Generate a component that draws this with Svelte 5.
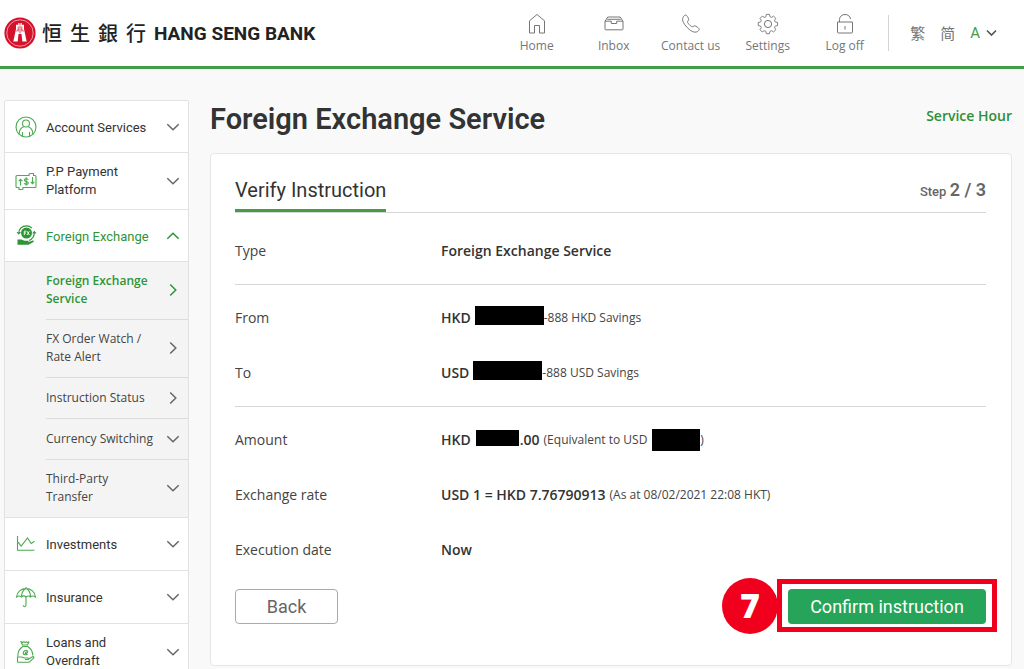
<script>
  const nav = [
    { id: 'home', label: 'Home' },
    { id: 'inbox', label: 'Inbox' },
    { id: 'phone', label: 'Contact us' },
    { id: 'gear', label: 'Settings' },
    { id: 'lock', label: 'Log off' }
  ];

  const menu = [
    { id: 'account', label: 'Account Services' },
    { id: 'payment', label: 'P.P Payment Platform', tall: true },
    {
      id: 'fx',
      label: 'Foreign Exchange',
      open: true,
      children: [
        { label: 'Foreign Exchange Service', active: true },
        { label: 'FX Order Watch / Rate Alert' },
        { label: 'Instruction Status' },
        { label: 'Currency Switching', expands: true },
        { label: 'Third-Party Transfer', expands: true }
      ]
    },
    { id: 'invest', label: 'Investments' },
    { id: 'insurance', label: 'Insurance' },
    { id: 'loans', label: 'Loans and Overdraft', tall: true }
  ];
</script>

{#snippet chevron(dir)}
  <svg class="chevron" width="14" height="14" viewBox="0 0 14 14" aria-hidden="true">
    {#if dir === 'right'}
      <path d="M4.2 1.5 9.8 7l-5.600 5.500" />
    {:else if dir === 'up'}
      <path d="M1.300 9.800 7 4.200l5.700 5.600" />
    {:else}
      <path d="M1.300 4.200 7 9.800l5.700-5.600" />
    {/if}
  </svg>
{/snippet}

<header>
  <a class="brand" href="#home" aria-label="Hang Seng Bank">
    <svg width="32" height="32" viewBox="0 0 32 32" aria-hidden="true">
      <circle cx="16" cy="16" r="15.600" fill="#d5112c" />
      <circle cx="16" cy="16" r="13.200" fill="none" stroke="#f5b9c0" stroke-width=".8" />
      <path d="M14.300 6h1.200v1.800h1V6h1.200v1.800h2.300v4.200l2.700 12.500h-4.400l-.8-7.500h-3l-.8 7.500H9.300L12 12V7.800h2.300z" fill="#fff" />
      <path d="M14.200 9.500v5M16 8.500v8M17.800 9.500v5M12.300 14.500l1.700-2M19.700 14.500l-1.700-2" stroke="#d5112c" stroke-width=".8" fill="none" />
    </svg>
    <span class="han" lang="zh-Hant"><span>恒</span><span>生</span><span>銀</span><span>行</span></span>
    <span class="latin">HANG SENG BANK</span>
  </a>
  <nav class="top-nav">
    {#each nav as item}
      <a href="#{item.id}">
        <svg width="22" height="22" viewBox="0 0 22 22" aria-hidden="true">
          {#if item.id === 'home'}
            <path d="M3.500 7.800 11 1.500l7.500 6.300v12.200h-5v-7.500h-5V20h-5z" />
          {:else if item.id === 'inbox'}
            <path d="M2 8.200 4.800 4h12.400L20 8.200V16q0 .8-.8.800H2.800Q2 16.800 2 16zM2 8.200h6.300v2.300h5.400V8.200H20M4.300 6.300h13.400" />
          {:else if item.id === 'phone'}
            <path d="M3.700 3.300C5.500 1.200 6.600 2 7.600 3.800c1.500 2.500 1.300 3 .3 4.200-.8.900-.4 1.600 1.200 3.400 1.900 2 3 2.900 4 2.100 1.200-.9 1.800-1 4 .5 2.400 1.500 2.700 2.400 1.200 3.900-2.300 2.300-6.300 1.500-10.800-3.100C2.600 9.900 1.400 6 3.700 3.300z" />
          {:else if item.id === 'gear'}
            <path d="M9.300 1.500h3.400l.5 2.500 1.800.8 2.200-1.400 2.400 2.400-1.400 2.200.8 1.800 2.500.5v3.400l-2.500.5-.8 1.800 1.400 2.200-2.400 2.400-2.200-1.400-1.800.8-.5 2.500H9.300L8.800 20 7 19.200l-2.200 1.400-2.400-2.400L3.800 16 3 14.200l-2.500-.5v-3.400L3 9.800 3.800 8 2.400 5.800l2.400-2.400L7 4.800 8.800 4z" transform="translate(.8 0) scale(.92)" stroke-linejoin="round" />
            <circle cx="11" cy="11" r="3.600" />
          {:else}
            <path d="M5.500 9V6.500C5.500 3.500 8 1.500 11 1.500S16.300 3.300 16.500 6M3.500 9h15v10q0 1-1 1h-13q-1 0-1-1zM11 13v3.500" />
          {/if}
        </svg>
        <span>{item.label}</span>
      </a>
    {/each}
  </nav>
  <div class="lang">
    <button type="button" lang="zh-Hant">繁</button>
    <button type="button" lang="zh-Hans">简</button>
    <button type="button" class="size" aria-label="Text size A">A
      <svg width="11" height="8" viewBox="0 0 11 8" aria-hidden="true"><path d="M1 1.500 5.500 6 10 1.500" /></svg>
    </button>
  </div>
</header>

<div class="page">
  <aside>
    {#each menu as item}
      <button type="button" class="item" class:tall={item.tall} class:open={item.open} aria-expanded={!!item.open}>
        <svg class="icon" width="22" height="22" viewBox="0 0 22 22" aria-hidden="true">
          {#if item.id === 'account'}
            <circle cx="11" cy="11" r="10" />
            <circle cx="11" cy="7.500" r="3.500" />
            <path d="M4.200 18.200c0-4.500 2.200-6.700 4.500-7.500M17.800 18.200c0-4.500-2.200-6.700-4.500-7.500M7.500 16v4M14.500 16v4" />
          {:else if item.id === 'payment'}
            <path d="M4 17.500H2q-1 0-1-1v-10q0-1 1-1h12V4.500q0-1 1-1h3.500v2h1.500q1 0 1 1v10q0 1-1 1H8v1q0 1-1 1H4z" />
            <path d="M5.500 15.500V9.500M3.700 11.200 5.500 9.400l1.800 1.800M17.500 7v6.500M15.700 11.800l1.800 1.800 1.800-1.800M13.200 9.700c-.5-1.200-3.900-1.300-3.900.4 0 1.900 4 1.100 4 3 0 1.800-3.500 1.700-4.200.2M11.200 7.300v8.400" />
          {:else if item.id === 'fx'}
            <circle cx="11.500" cy="8" r="5.500" fill="currentColor" stroke="none" />
            <path d="M9.300 10V6.200h2M9.300 8h1.700M12 6.200l2.400 3.800M14.400 6.200 12 10" stroke="#fff" stroke-width=".9" />
            <path d="M3.800 8.500C3.500 4 7 .9 11.500.9c2 0 4 .8 5.500 2.200M19.300 6.500c.5 4.500-2 8-5.300 9M2 7l1.800 2L5.500 7M17.700 8.500l1.600-2 1.700 2" />
            <path d="M2.500 14.500h4l3 1.200h3.500c1 .2.800 1.300 0 1.500l4.800-1.700c1.300-.2 1.400.9.600 1.400l-4.800 2.800H2.500z" fill="currentColor" stroke="none" />
          {:else if item.id === 'invest'}
            <path d="M2.500 3v14.300h17M3 9.200l3.200 4L12.500 5l3.700 5.500 3.300-2.300" />
          {:else if item.id === 'insurance'}
            <path d="M1.500 11C2 6 6 2.600 11 2.600S20 6 20.500 11c-1.600-1.300-4-1.300-5 0-1.300-1.300-3.200-1.300-4.500 0-1.300-1.300-3.200-1.300-4.500 0-1-1.300-3.400-1.300-5 0zM6.500 11c0-4 1.500-7 4.500-8.400 3 1.400 4.500 4.400 4.500 8.400M11 1v1.600M11 10.500V19c0 2.200-2.700 2.200-2.700.3" />
          {:else}
            <path d="M7.500 4 6 .8c1.200.8 2 .8 2.700 0 1 .8 2 .8 2.800 0 .8.800 1.500.8 2.500 0L12.500 4zM7.200 5.500h6M7.500 5.700c-3.500 2.500-5 6-4.500 9.800M13 5.700c3.300 2.200 4.800 5 4.800 8.800" />
            <path d="M12.500 13c-1 1-3.800 1.200-4.200-.5-.5-2.300 2.700-4.300 4.200-2.500 1 1.300-1.700 3.500-2.200 2.300-.2-.7.700-1.600 1.400-1.300M2.500 21.300v-5.300h4l3 1h3.500c1.500.2 1 1.500 0 1.500h-3M13.500 18l4-2.300c1.500-.3 1.800.8.800 1.600L14 21.300H2.500" />
          {/if}
        </svg>
        <span>{item.label}</span>
        {@render chevron(item.open ? 'up' : 'down')}
      </button>
      {#if item.children}
        <ul>
          {#each item.children as sub}
            <li>
              <a href="#sub" class:active={sub.active}>
                <span>{sub.label}</span>
                {@render chevron(sub.expands ? 'down' : 'right')}
              </a>
            </li>
          {/each}
        </ul>
      {/if}
    {/each}
  </aside>

  <main>
    <div class="title">
      <h1>Foreign Exchange Service</h1>
      <a href="#hours">Service Hour</a>
    </div>
    <section class="card">
      <div class="card-head">
        <h2>Verify Instruction</h2>
        <p>Step <b>2 / 3</b></p>
      </div>
      <dl class="first">
        <div><dt>Type</dt><dd><b>Foreign Exchange Service</b></dd></div>
      </dl>
      <dl>
        <div><dt>From</dt><dd><b>HKD</b><i class="mask account"></i><small>-888 HKD Savings</small></dd></div>
        <div><dt>To</dt><dd><b>USD</b><i class="mask account"></i><small>-888 USD Savings</small></dd></div>
      </dl>
      <dl>
        <div><dt>Amount</dt><dd><b>HKD</b><i class="mask amount"></i><b>.00</b><small class="gap">(Equivalent to USD</small><i class="mask usd"></i><small>)</small></dd></div>
        <div><dt>Exchange rate</dt><dd><b>USD 1 = HKD 7.76790913</b><small class="gap">(As at 08/02/2021 22:08 HKT)</small></dd></div>
        <div><dt>Execution date</dt><dd><b>Now</b></dd></div>
      </dl>
      <div class="actions">
        <button type="button" class="back">Back</button>
        <div class="callout">
          <button type="button" class="confirm">Confirm instruction</button>
          <span class="frame"></span>
          <span class="step">7</span>
        </div>
      </div>
    </section>
  </main>
</div>

<style>
  :global(body) {
    background: #f9f9f9;
    color: #333;
    font-family: 'Open Sans', 'Noto Sans', sans-serif;
  }
  * { box-sizing: border-box; }
  a { color: inherit; text-decoration: none; }
  button { font: inherit; color: inherit; background: none; border: 0; padding: 0; cursor: pointer; }
  h1, h2, p, dl, dd, ul { margin: 0; padding: 0; }
  svg { flex: none; fill: none; stroke: currentColor; }

  header {
    display: flex;
    align-items: center;
    height: 69px;
    padding: 0 27px 1px 4px;
    background: #fff;
    border-bottom: 3px solid #439c47;
  }
  .brand { display: flex; align-items: center; margin-right: auto; color: #222; white-space: nowrap; }
  .brand svg { stroke: none; }
  .han {
    display: flex;
    gap: 8px;
    margin: 0 8px 0 6px;
    font: 500 20px/28px 'Noto Sans CJK TC', sans-serif;
  }
  .latin { padding-top: 2px; font: 700 19px/28px Roboto, sans-serif; }
  .top-nav { display: flex; padding-top: 2px; }
  .top-nav a {
    display: flex;
    flex-direction: column;
    align-items: center;
    gap: 2px;
    width: 77px;
    color: #767676;
    font-size: 12px;
    line-height: 18px;
    white-space: nowrap;
  }
  .lang {
    display: flex;
    align-items: center;
    gap: 15px;
    height: 36px;
    margin-left: 5px;
    padding-left: 21px;
    border-left: 1px solid #d4d4d4;
    color: #767676;
    font: 15px/20px 'Noto Sans CJK TC', sans-serif;
  }
  .size { display: flex; align-items: center; gap: 6px; color: #439c47; font: 15px/20px Roboto, sans-serif; }
  .size svg { color: #555; stroke-width: 1.6; }

  .page { display: flex; align-items: flex-start; gap: 21px; padding: 31px 12px 0 4px; }

  aside {
    flex: none;
    width: 185px;
    background: #fff;
    border: 1px solid #e2e2e2;
    border-radius: 2px;
  }
  .item {
    display: flex;
    align-items: center;
    width: 100%;
    height: 51px;
    padding: 0 8px 0 10px;
    font: 400 13px/18px Roboto, sans-serif;
    text-align: left;
  }
  .item + .item { height: 52px; border-top: 1px solid #e2e2e2; }
  ul ~ .item, ul ~ .item + .item { height: 53px; border-top: 1px solid #e2e2e2; }
  aside .item.tall.tall.tall { height: 57px; }
  .item.open { color: #2f9437; }
  .item span { flex: 1; margin-left: 9px; padding-right: 24px; }
  .item:not(.tall) span { padding-right: 0; padding-top: 2px; white-space: nowrap; }
  .icon { color: #4aab50; stroke-width: 1.1; }
  .open .icon { color: #2f9437; }
  .chevron { stroke-width: 1.5; color: #666; }
  .open .chevron, .active .chevron { color: #2f9437; }

  ul { list-style: none; padding-left: 41px; background: #f4f4f4; border-top: 1px solid #e2e2e2; }
  li + li { border-top: 1px solid #dcdcdc; }
  li a {
    display: flex;
    align-items: center;
    justify-content: space-between;
    min-height: 40px;
    padding: 10px 8px 11px 0;
    color: #444;
    font-size: 12px;
    line-height: 18px;
  }
  li a span { max-width: 112px; }
  li a.active { color: #2f9437; font-weight: 600; }

  main { flex: 1; min-width: 0; }
  .title { display: flex; align-items: flex-start; justify-content: space-between; height: 53px; }
  h1 { font: 600 29px/38px Roboto, sans-serif; }
  .title a { padding-top: 6px; color: #2f8f36; font-size: 14px; font-weight: 600; line-height: 20px; }

  .card { padding: 23px 25px 41px 24px; background: #fff; border: 1px solid #e6e6e6; border-radius: 4px; }
  .card-head { display: flex; justify-content: space-between; border-bottom: 1px solid #d6d6d6; }
  h2 { padding: 0 0 6px; border-bottom: 3px solid #439c47; font: 400 20px/26px Roboto, sans-serif; }
  .card-head p { color: #666; font: 500 13px/26px Roboto, sans-serif; }
  .card-head p b { font-size: 18px; font-weight: 600; }

  dl { padding: 5px 0 6px; }
  dl + dl { border-top: 1px solid #d6d6d6; }
  dl.first { padding-top: 10px; }
  dl div { display: flex; align-items: center; height: 55px; font-size: 14px; line-height: 20px; }
  dt { flex: 0 0 206px; color: #444; }
  dd { display: flex; align-items: center; white-space: nowrap; }
  dd b { font-weight: 600; }
  small { padding-top: 1px; font-size: 12px; color: #444; }
  .gap { margin-left: 4px; }
  .mask { background: #000; }
  .account { width: 69px; height: 19px; margin: 0 0 4px 4px; }
  .amount { width: 43px; height: 16px; margin: 0 1px 4px 5px; }
  .usd { width: 48px; height: 22px; margin-left: 5px; }

  .actions { display: flex; justify-content: space-between; margin-top: 6px; }
  .back {
    width: 103px;
    height: 35px;
    border: 1px solid #aaa;
    border-radius: 4px;
    color: #666;
    font: 400 18px/24px Roboto, sans-serif;
  }
  .callout { position: relative; }
  .confirm {
    width: 198px;
    height: 35px;
    border-radius: 4px;
    background: #26a45a;
    color: #fff;
    font: 400 18px/24px Roboto, sans-serif;
  }
  .frame { position: absolute; inset: -10px -11px -8px -11px; border: 5px solid #f0001c; pointer-events: none; }
  .step {
    position: absolute;
    left: -66px;
    top: -11px;
    width: 56px;
    height: 56px;
    border-radius: 50%;
    background: #f0001c;
    color: #fff;
    font: 800 34px/55px 'Open Sans', sans-serif;
    text-align: center;
  }
</style>
